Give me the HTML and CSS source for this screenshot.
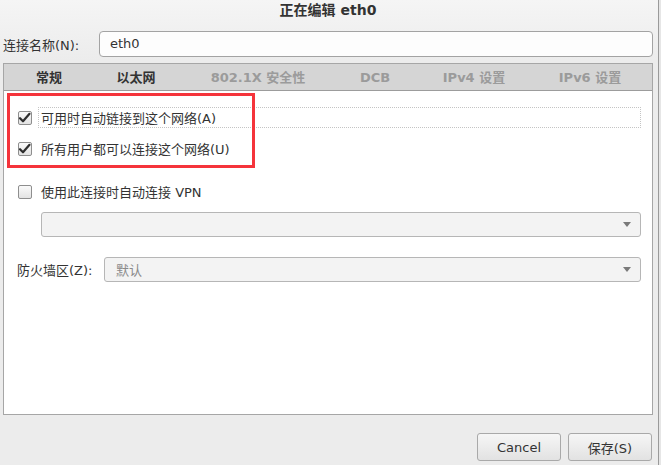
FILE: index.html
```html
<!DOCTYPE html>
<html lang="zh-CN">
<head>
    <meta charset="UTF-8">
    <title>正在编辑 eth0</title>
    <link rel="stylesheet" href="styles.css">
</head>
<body>
    <div class="screen">
        <div class="dialog">
            <div class="titlebar">正在编辑 eth0</div>

            <div class="name-row">
                <label class="name-label">连接名称(N):</label>
                <div class="entry">eth0</div>
            </div>

            <div class="notebook">
                <div class="tabs">
                    <div class="tab tab-1">常规</div>
                    <div class="tab tab-2">以太网</div>
                    <div class="tab tab-3 off">802.1X 安全性</div>
                    <div class="tab tab-4 off">DCB</div>
                    <div class="tab tab-5 off">IPv4 设置</div>
                    <div class="tab tab-6 off">IPv6 设置</div>
                </div>

                <div class="page">
                    <div class="highlight"></div>

                    <div class="check-row row-1">
                        <span class="check">
                            <svg width="16" height="14" viewBox="0 0 16 14"><path d="M3 7.2 L6 10.3 L12.5 2.8" fill="none" stroke="#2e2e2e" stroke-width="2.2" stroke-linecap="round" stroke-linejoin="round"/></svg>
                        </span>
                        <span class="check-label focus">可用时自动链接到这个网络(A)</span>
                    </div>

                    <div class="check-row row-2">
                        <span class="check">
                            <svg width="16" height="14" viewBox="0 0 16 14"><path d="M3 7.2 L6 10.3 L12.5 2.8" fill="none" stroke="#2e2e2e" stroke-width="2.2" stroke-linecap="round" stroke-linejoin="round"/></svg>
                        </span>
                        <span class="check-label">所有用户都可以连接这个网络(U)</span>
                    </div>

                    <div class="check-row row-3">
                        <span class="check"></span>
                        <span class="check-label">使用此连接时自动连接 VPN</span>
                    </div>

                    <div class="combo vpn-combo">
                        <span class="combo-text"></span>
                        <span class="arrow"></span>
                    </div>

                    <div class="zone-row">
                        <label class="zone-label">防火墙区(Z):</label>
                        <div class="combo zone-combo">
                            <span class="combo-text">默认</span>
                            <span class="arrow"></span>
                        </div>
                    </div>
                </div>
            </div>

            <div class="buttons">
                <button class="btn">Cancel</button>
                <button class="btn">保存(S)</button>
            </div>
        </div>
        <div class="edge"></div>
    </div>
</body>
</html>
```

FILE: styles.css
```css
body {
    margin: 0;
    font-family: "DejaVu Sans", "Noto Sans CJK SC", sans-serif;
    font-size: 13px;
    color: #2e2e2e;
}

.screen {
    display: flex;
    width: 661px;
    height: 465px;
    overflow: hidden;
    background: linear-gradient(#f5f5f5, #ececec 60px, #ececec);
}

/* dialog body */
.dialog {
    width: 658px;
    padding: 0 5px 0 3px;
    box-sizing: border-box;
    display: flex;
    flex-direction: column;
}

.titlebar {
    height: 31px;
    line-height: 21px;
    text-align: center;
    font-size: 14px;
    font-weight: bold;
    color: #333;
}

/* connection name */
.name-row {
    display: flex;
    align-items: center;
    height: 26px;
}

.name-label {
    width: 96px;
    color: #333;
}

.entry {
    flex: 1;
    height: 26px;
    line-height: 24px;
    padding-left: 10px;
    border: 1px solid #a3a3a3;
    border-radius: 4px;
    background: #fdfdfd;
    box-sizing: border-box;
    color: #333;
}

/* notebook */
.notebook {
    margin-top: 6px;
    height: 352px;
    border: 1px solid #a6a6a6;
    box-sizing: border-box;
    display: flex;
    flex-direction: column;
}

.tabs {
    display: flex;
    height: 27px;
    background: #d5d5d5;
    border-bottom: 1px solid #9c9c9c;
    box-sizing: border-box;
}

.tab {
    line-height: 28px;
    text-align: center;
    font-weight: bold;
    color: #333;
}

.tab.off {
    color: #9b9b9b;
}

.tab-1 { width: 90px; }
.tab-2 { width: 84px; }
.tab-3 { width: 160px; }
.tab-4 { width: 74px; }
.tab-5 { width: 124px; }
.tab-6 { flex: 1; padding-right: 8px; }

.page {
    flex: 1;
    position: relative;
    background: #fff;
    padding: 16px 11px 0 13px;
}

/* red annotation box */
.highlight {
    position: absolute;
    left: 3px;
    top: 2px;
    width: 248px;
    height: 75px;
    border: 3px solid #f5343b;
    box-sizing: border-box;
}

.check-row {
    display: flex;
    align-items: center;
    height: 21px;
}

.row-2 { margin-top: 10px; }
.row-3 { margin-top: 22px; }

.check {
    width: 14px;
    height: 14px;
    margin: 0 6px 0 1px;
    border: 1px solid #8e8e8e;
    border-radius: 2px;
    background: linear-gradient(#fafafa, #e3e3e3);
    box-sizing: border-box;
    position: relative;
}

.check svg {
    position: absolute;
    left: -2px;
    top: -1px;
}

.check-label {
    height: 21px;
    line-height: 21px;
    padding-left: 2px;
    border: 1px dotted transparent;
    box-sizing: border-box;
    color: #333;
}

.check-label.focus {
    flex: 1;
    border-color: #c4c4c4;
}

/* combo boxes */
.combo {
    display: flex;
    align-items: center;
    justify-content: space-between;
    height: 25px;
    padding: 0 9px 0 11px;
    border: 1px solid #b6b6b6;
    border-radius: 3px;
    background: #f3f3f3;
    box-sizing: border-box;
}

.vpn-combo {
    margin: 10px 0 0 24px;
}

.combo-text {
    color: #8a8a8a;
}

.arrow {
    width: 0;
    height: 0;
    border-left: 4px solid transparent;
    border-right: 4px solid transparent;
    border-top: 5px solid #7a7a7a;
}

.zone-row {
    display: flex;
    align-items: center;
    margin-top: 20px;
}

.zone-label {
    width: 87px;
    color: #333;
}

.zone-combo {
    flex: 1;
}

/* bottom buttons */
.buttons {
    display: flex;
    justify-content: flex-end;
    gap: 7px;
    margin-top: 18px;
    padding-right: 1px;
}

.btn {
    width: 84px;
    height: 28px;
    font-family: inherit;
    font-size: 13px;
    color: #333;
    border: 1px solid #a9a9a9;
    border-radius: 3px;
    background: linear-gradient(#f6f6f6, #e2e2e2);
}

/* edge of the next window */
.edge {
    flex: 1;
    border-left: 1px solid #9a9a9a;
    background: #e6e6e6;
}
```
